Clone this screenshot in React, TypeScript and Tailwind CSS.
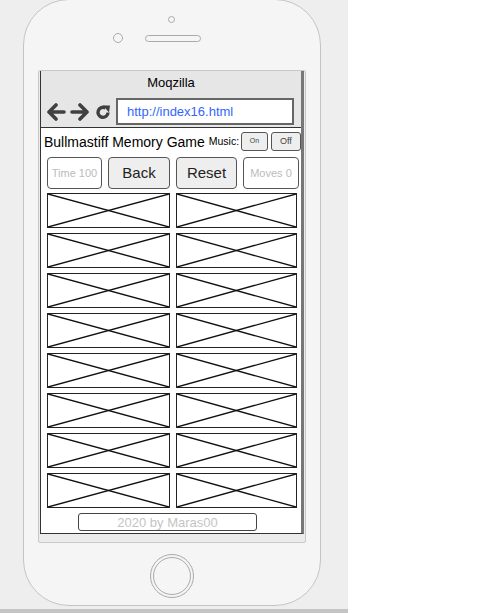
import React from 'react';

const Arrow = ({ flip }: { flip?: boolean }) => (
    <svg width="19" height="18" viewBox="0 0 19 18" className={flip ? 'scale-x-[-1]' : ''}>
        <path d="M2 9 L17 9 M9 2 L2 9 L9 16" stroke="#404040" strokeWidth="3.6" fill="none" strokeLinecap="round" strokeLinejoin="round" />
    </svg>
);

const Refresh = () => (
    <svg width="16" height="16" viewBox="0 0 16 16">
        <path d="M13 8.5 A5 5 0 1 1 10.5 4" stroke="#404040" strokeWidth="3.4" fill="none" />
        <path d="M8 1.5 L15 1.5 L14 8.5 Z" fill="#404040" />
    </svg>
);

const Card = () => (
    <div className="h-[35px] border border-[#222] bg-white">
        <svg width="100%" height="100%" viewBox="0 0 100 100" preserveAspectRatio="none" className="block">
            <line x1="0" y1="0" x2="100" y2="100" stroke="#111" strokeWidth="1.4" vectorEffect="non-scaling-stroke" />
            <line x1="100" y1="0" x2="0" y2="100" stroke="#111" strokeWidth="1.4" vectorEffect="non-scaling-stroke" />
        </svg>
    </div>
);

const App = () => {
    const font = "font-['Liberation_Sans',Arial,sans-serif]";
    return (
        <div className={`flex w-[503px] h-[613px] bg-white ${font}`}>
            <div className="w-[348px] h-[613px] bg-[#eeeeee] flex flex-col">
                <div className="ml-[23px] w-[298px] h-[607px] mt-[-1px] rounded-[46px] border border-[#c4c4c4] bg-[#f5f5f5] flex flex-col">
                    {/* speaker + camera */}
                    <div className="mt-[16px] ml-[144px] w-[7px] h-[7px] rounded-full border border-[#aaa]" />
                    <div className="mt-[10px] ml-[89px] flex items-center gap-[22px]">
                        <div className="w-[10px] h-[10px] rounded-full border border-[#aaa]" />
                        <div className="w-[56px] h-[7px] rounded-full border border-[#aaa]" />
                    </div>

                    {/* screen frame */}
                    <div className="mt-[27px] ml-[14px] w-[268px] h-[473px] border border-[#c8c8c8] rounded-[2px] bg-[#ebebeb] flex flex-col">
                        <div className="ml-[1px] w-[264px] h-[463px] border-l border-b border-[#333] border-r-[3px] border-r-[#777] bg-white flex flex-col">
                            {/* browser header */}
                            <div className="h-[57px] shrink-0 bg-[#e6e6e6] border-b border-[#333] flex flex-col">
                                <div className="text-center text-[13px] text-black leading-none mt-[5px]">Moqzilla</div>
                                <div className="flex items-center mt-[9px] pl-[6px]">
                                    <Arrow />
                                    <div className="ml-[4px]"><Arrow flip /></div>
                                    <div className="ml-[6px]"><Refresh /></div>
                                    <div className="ml-[5px] w-[178px] h-[27px] bg-white border-2 border-[#666] flex items-center pl-[9px] text-[13px] text-[#3366ff]">
                                        http://index16.html
                                    </div>
                                </div>
                            </div>

                            {/* title row */}
                            <div className="flex items-center pl-[3px] h-[27px] shrink-0 whitespace-nowrap">
                                <span className="text-[14px] text-black leading-none">Bullmastiff Memory Game</span>
                                <span className="ml-[4px] text-[10.5px] text-black leading-none">Music:</span>
                                <div className="ml-[2px] w-[28px] h-[19px] rounded-[3px] border border-[#555] bg-[#eeeeee] text-[7px] text-[#444] flex items-center justify-center">On</div>
                                <div className="ml-[3px] w-[32px] h-[19px] rounded-[3px] border border-[#555] bg-[#eeeeee] text-[9px] text-[#444] flex items-center justify-center">Off</div>
                            </div>

                            {/* control buttons */}
                            <div className="flex items-center pl-[6px] mt-[2px] gap-[6px] shrink-0">
                                <div className="w-[55px] h-[32px] rounded-[4px] border border-[#555] bg-white text-[11px] text-[#bbb] flex items-center justify-center">Time 100</div>
                                <div className="w-[62px] h-[32px] rounded-[4px] border border-[#555] bg-[#eeeeee] text-[15px] text-[#222] flex items-center justify-center">Back</div>
                                <div className="w-[61px] h-[32px] rounded-[4px] border border-[#555] bg-[#eeeeee] text-[15px] text-[#222] flex items-center justify-center">Reset</div>
                                <div className="w-[56px] h-[32px] rounded-[4px] border border-[#555] bg-white text-[11px] text-[#bbb] flex items-center justify-center">Moves 0</div>
                            </div>

                            {/* cards */}
                            <div className="grid grid-cols-[123px_121px] gap-x-[6px] gap-y-[5px] pl-[6px] mt-[4px] shrink-0">
                                {Array.from({ length: 16 }).map((_, i) => (
                                    <Card key={i} />
                                ))}
                            </div>

                            {/* footer */}
                            <div className="ml-[37px] mt-[5px] w-[179px] h-[18px] shrink-0 rounded-[3px] border border-[#444] text-[13px] text-[#c4c4c4] flex items-center justify-center leading-none">
                                2020 by Maras00
                            </div>
                        </div>
                    </div>

                    {/* home button */}
                    <div className="mt-[11px] ml-[126px] w-[44px] h-[44px] rounded-full border border-[#aaa] flex items-center justify-center">
                        <div className="w-[38px] h-[38px] rounded-full border border-[#aaa]" />
                    </div>
                </div>
                <div className="mt-auto h-[4px] bg-[#c4c4c4]" />
            </div>
        </div>
    );
};

export default App;
